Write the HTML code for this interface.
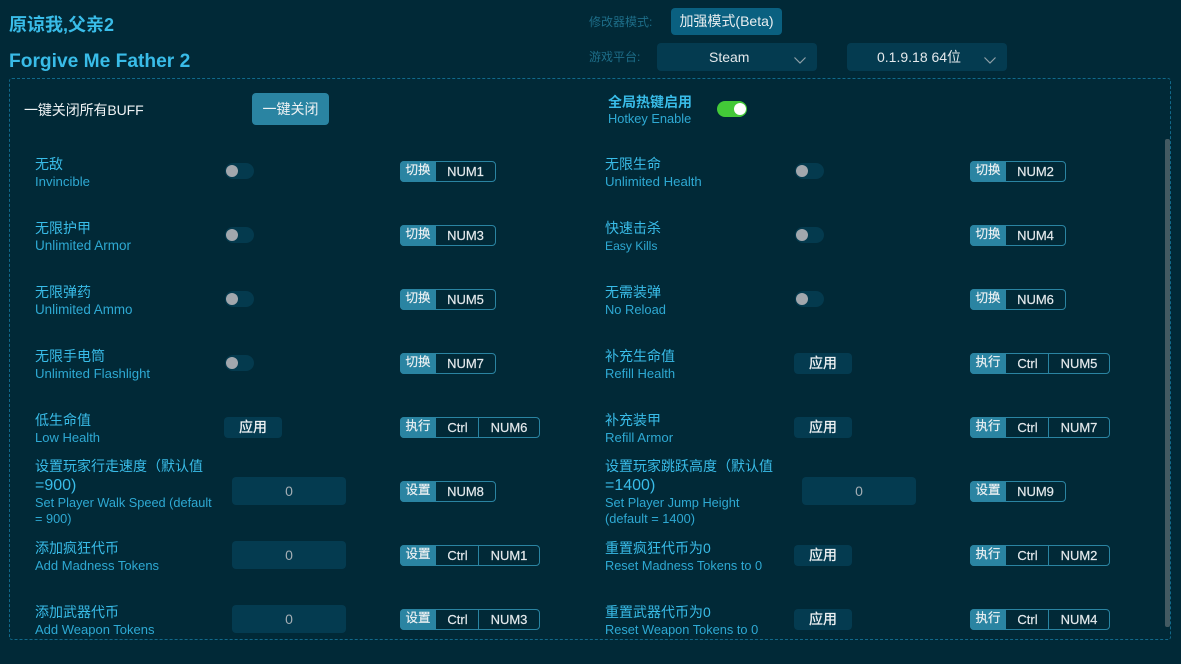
<!DOCTYPE html>
<html><head><meta charset="utf-8">
<style>
html,body{margin:0;padding:0;width:1181px;height:653px;overflow:hidden;background:#012937;font-family:"Liberation Sans","Noto Sans CJK SC",sans-serif;}
div,span{position:absolute;white-space:nowrap;box-sizing:border-box}
.r{width:570px;height:64px}
.c{left:35px;top:0;font-size:14px;line-height:24px;color:#39bce8}
.c b{font-weight:normal;font-size:16px}
.e{left:35px;top:22px;font-size:13px;line-height:16px;color:#2ea9d3}
.t{left:225px;top:11px;width:29px;height:16px;border-radius:8px;background:#043a4e}
.t:after{content:"";position:absolute;left:1px;top:2px;width:12px;height:12px;border-radius:6px;background:#a2a7ad}
.k{left:400px;top:9px;height:21px;border:1px solid #2a84a2;border-radius:4px;font-size:13px;color:#e4e9ec;-webkit-text-stroke:.2px #e4e9ec}
.k span{top:0;height:19px;line-height:20px;text-align:center}
.k .g{left:-1px;top:-1px;width:36px;height:21px;background:#2a84a2;border-radius:4px 0 0 4px;line-height:19px;font-size:12.5px;color:#eef3f5}
.k .x{left:35px;width:43px;border-right:1px solid #2a84a2;padding-left:1px}
.w1{width:96px}.w2{width:140px}
.a{left:224px;top:9px;width:58px;height:21px;background:#043b50;border-radius:4px;color:#eef2f4;font-size:14px;line-height:21px;text-align:center;-webkit-text-stroke:.3px #eef2f4}
.i{left:232px;top:5px;width:114px;height:28px;background:#043b50;border-radius:4px;color:#a4aeb4;font-size:14px;line-height:28px;text-align:center}
.s{height:28px;background:#043b50;border-radius:4px;color:#e4e9ec;font-size:14px;line-height:28px}
svg{position:absolute}
</style></head><body>
<div style="left:9px;top:13px;font-size:18px;font-weight:bold;line-height:25px;color:#39bce8">原谅我,父亲2</div>
<div style="left:9px;top:49px;font-size:19.2px;font-weight:bold;line-height:25px;color:#39bce8">Forgive Me Father 2</div>

<div style="left:589px;top:13px;font-size:12px;line-height:18px;color:#1d6d88">修改器模式:</div>
<div style="left:671px;top:8px;width:111px;height:27px;background:#0a6080;border-radius:4px;color:#e9eef0;font-size:14px;line-height:27px;text-align:center">加强模式(Beta)</div>
<div style="left:589px;top:48px;font-size:12px;line-height:18px;color:#1d6d88">游戏平台:</div>
<div class="s" style="left:657px;top:43px;width:160px"><span style="left:52px;top:0">Steam</span>
<svg style="left:136px;top:12px" width="14" height="10"><path d="M1.5 2.5L7 8L12.5 2.5" fill="none" stroke="#8fa0a8" stroke-width="1.2"/></svg></div>
<div class="s" style="left:847px;top:43px;width:160px"><span style="left:30px;top:0">0.1.9.18 64位</span>
<svg style="left:136px;top:12px" width="14" height="10"><path d="M1.5 2.5L7 8L12.5 2.5" fill="none" stroke="#8fa0a8" stroke-width="1.2"/></svg></div>

<div style="left:9px;top:78px;width:1162px;height:562px;border:1px dashed #11698a;border-radius:3px"></div>
<div style="left:1165px;top:139px;width:5px;height:488px;background:#435a62;border-radius:2px"></div>

<div style="left:24px;top:100px;font-size:14px;line-height:20px;color:#eef2f4;letter-spacing:-.1px">一键关闭所有BUFF</div>
<div style="left:252px;top:93px;width:77px;height:32px;background:#2a84a2;border-radius:4px;color:#eef2f4;font-size:14px;line-height:32px;text-align:center">一键关闭</div>
<div style="left:608px;top:93px;font-size:14px;font-weight:bold;line-height:18px;color:#39bce8">全局热键启用</div>
<div style="left:608px;top:111px;font-size:12.8px;line-height:16px;color:#2ea9d3">Hotkey Enable</div>
<div style="left:717px;top:101px;width:30px;height:16px;border-radius:8px;background:#43c938"><span style="left:17px;top:2px;width:12px;height:12px;border-radius:6px;background:#fff"></span></div>

<!-- left col -->
<div class="r" style="left:0;top:152px"><div class="c">无敌</div><div class="e" style="font-size:13.2px">Invincible</div><div class="t"></div><div class="k w1"><span class="g">切换</span><span style="left:35px;width:59px">NUM1</span></div></div>
<div class="r" style="left:0;top:216px"><div class="c">无限护甲</div><div class="e" style="font-size:13.5px">Unlimited Armor</div><div class="t"></div><div class="k w1"><span class="g">切换</span><span style="left:35px;width:59px">NUM3</span></div></div>
<div class="r" style="left:0;top:280px"><div class="c">无限弹药</div><div class="e" style="font-size:13.4px">Unlimited Ammo</div><div class="t"></div><div class="k w1"><span class="g">切换</span><span style="left:35px;width:59px">NUM5</span></div></div>
<div class="r" style="left:0;top:344px"><div class="c">无限手电筒</div><div class="e" style="font-size:13.2px">Unlimited Flashlight</div><div class="t"></div><div class="k w1"><span class="g">切换</span><span style="left:35px;width:59px">NUM7</span></div></div>
<div class="r" style="left:0;top:408px"><div class="c">低生命值</div><div class="e">Low Health</div><div class="a">应用</div><div class="k w2"><span class="g">执行</span><span class="x">Ctrl</span><span style="left:78px;width:60px">NUM6</span></div></div>
<div class="r" style="left:0;top:472px"><div class="c" style="line-height:19px;top:-15px">设置玩家行走速度（默认值<br><b>=900)</b></div><div class="e" style="top:23px;font-size:12.75px">Set Player Walk Speed (default<br>= 900)</div><div class="i">0</div><div class="k w1"><span class="g">设置</span><span style="left:35px;width:59px">NUM8</span></div></div>
<div class="r" style="left:0;top:536px"><div class="c">添加疯狂代币</div><div class="e">Add Madness Tokens</div><div class="i">0</div><div class="k w2"><span class="g">设置</span><span class="x">Ctrl</span><span style="left:78px;width:60px">NUM1</span></div></div>
<div class="r" style="left:0;top:600px"><div class="c">添加武器代币</div><div class="e">Add Weapon Tokens</div><div class="i">0</div><div class="k w2"><span class="g">设置</span><span class="x">Ctrl</span><span style="left:78px;width:60px">NUM3</span></div></div>

<!-- right col -->
<div class="r" style="left:570px;top:152px"><div class="c">无限生命</div><div class="e" style="font-size:13.2px">Unlimited Health</div><div class="t"></div><div class="k w1"><span class="g">切换</span><span style="left:35px;width:59px">NUM2</span></div></div>
<div class="r" style="left:570px;top:216px"><div class="c">快速击杀</div><div class="e" style="font-size:12.1px">Easy Kills</div><div class="t"></div><div class="k w1"><span class="g">切换</span><span style="left:35px;width:59px">NUM4</span></div></div>
<div class="r" style="left:570px;top:280px"><div class="c">无需装弹</div><div class="e" style="font-size:12.9px">No Reload</div><div class="t"></div><div class="k w1"><span class="g">切换</span><span style="left:35px;width:59px">NUM6</span></div></div>
<div class="r" style="left:570px;top:344px"><div class="c">补充生命值</div><div class="e">Refill Health</div><div class="a">应用</div><div class="k w2"><span class="g">执行</span><span class="x">Ctrl</span><span style="left:78px;width:60px">NUM5</span></div></div>
<div class="r" style="left:570px;top:408px"><div class="c">补充装甲</div><div class="e" style="font-size:13.2px">Refill Armor</div><div class="a">应用</div><div class="k w2"><span class="g">执行</span><span class="x">Ctrl</span><span style="left:78px;width:60px">NUM7</span></div></div>
<div class="r" style="left:570px;top:472px"><div class="c" style="line-height:19px;top:-15px">设置玩家跳跃高度（默认值<br><b>=1400)</b></div><div class="e" style="top:23px;font-size:12.8px">Set Player Jump Height<br>(default = 1400)</div><div class="i">0</div><div class="k w1"><span class="g">设置</span><span style="left:35px;width:59px">NUM9</span></div></div>
<div class="r" style="left:570px;top:536px"><div class="c">重置疯狂代币为0</div><div class="e" style="font-size:12.75px">Reset Madness Tokens to 0</div><div class="a">应用</div><div class="k w2"><span class="g">执行</span><span class="x">Ctrl</span><span style="left:78px;width:60px">NUM2</span></div></div>
<div class="r" style="left:570px;top:600px"><div class="c">重置武器代币为0</div><div class="e" style="font-size:12.8px">Reset Weapon Tokens to 0</div><div class="a">应用</div><div class="k w2"><span class="g">执行</span><span class="x">Ctrl</span><span style="left:78px;width:60px">NUM4</span></div></div>
</body></html>
